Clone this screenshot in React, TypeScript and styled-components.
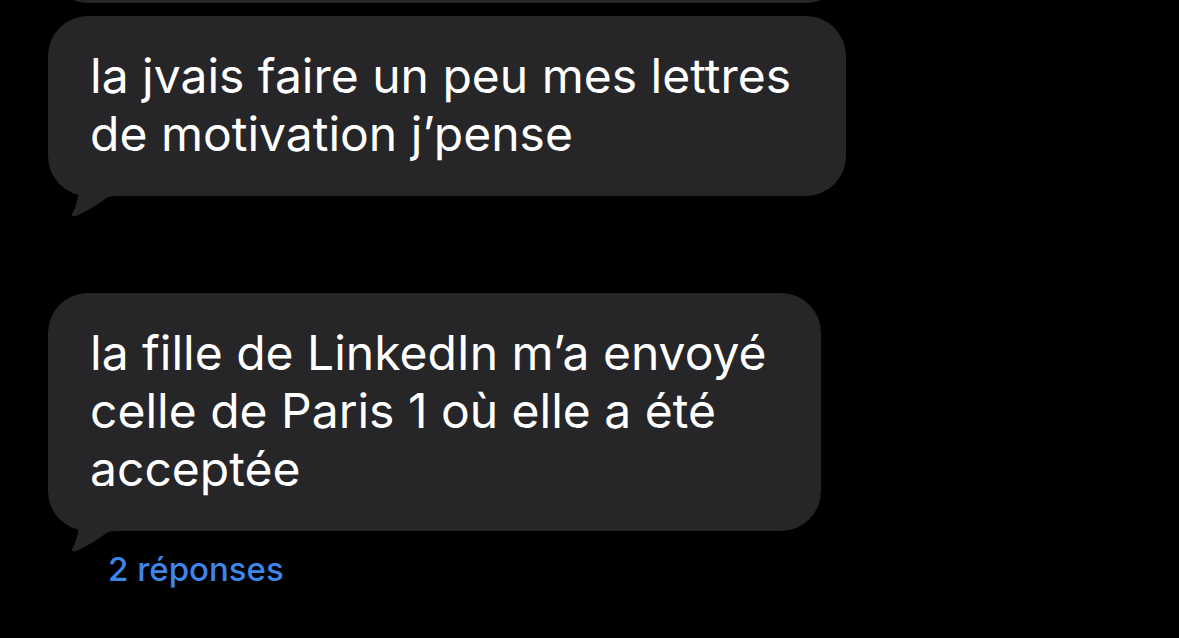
import React from "react";
import styled, { createGlobalStyle } from "styled-components";

const Global = createGlobalStyle`
  html, body { margin: 0; padding: 0; background: #000; }
  body { overflow: hidden; font-family: Inter, "Noto Sans", "Liberation Sans", sans-serif; }
`;

const Page = styled.div`
  width: 1179px;
  height: 638px;
  overflow: hidden;
  background: #000;
  display: flex;
  flex-direction: column;
  align-items: flex-start;
  padding-left: 48px;
  box-sizing: border-box;
`;

const BUBBLE = "#262628";

const PrevBubble = styled.div`
  width: 798px;
  height: 200px;
  margin-top: -197px;
  background: ${BUBBLE};
  border-radius: 40px;
  flex-shrink: 0;
`;

const Bubble = styled.div<{ $w: number; $mt: number }>`
  position: relative;
  width: ${(p) => p.$w}px;
  margin-top: ${(p) => p.$mt}px;
  box-sizing: border-box;
  padding: 31px 0 33px 42px;
  background: ${BUBBLE};
  border-radius: 40px;
  color: #fff;
  font-size: 48px;
  line-height: 58px;
  white-space: nowrap;
  flex-shrink: 0;
`;

const Line = styled.div``;

const Tail = styled.svg`
  position: absolute;
  left: 0;
  bottom: -21px;
  width: 74px;
  height: 66px;
`;

const Replies = styled.div`
  margin-top: 19px;
  margin-left: 60px;
  color: #3d86e8;
  font-size: 33px;
  line-height: 38px;
  font-weight: 500;
`;

const BubbleTail = () => (
  <Tail viewBox="0 0 74 66">
    <path
      d="M0,0 L0,2 C2,14 12,26 24,32 C29,35 31,40 30,46 C29,52 27,58 24,63 C23,65 26,66 28,65 C40,60 52,52 60,46 C63,45.5 66,45 74,45 L74,0 Z"
      fill={BUBBLE}
    />
  </Tail>
);

export default function App() {
  return (
    <>
      <Global />
      <Page>
        <PrevBubble />
        <Bubble $w={798} $mt={13}>
          <Line>la jvais faire un peu mes lettres</Line>
          <Line>de motivation j’pense</Line>
          <BubbleTail />
        </Bubble>
        <Bubble $w={773} $mt={97}>
          <Line>la fille de LinkedIn m’a envoyé</Line>
          <Line>celle de Paris 1 où elle a été</Line>
          <Line>acceptée</Line>
          <BubbleTail />
        </Bubble>
        <Replies>2 réponses</Replies>
      </Page>
    </>
  );
}
